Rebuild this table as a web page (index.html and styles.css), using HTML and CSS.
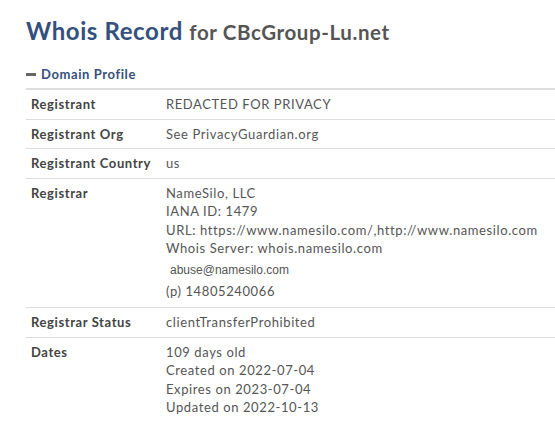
FILE: index.html
```html
<!DOCTYPE html>
<html>
<head>
<meta charset="utf-8">
<link rel="stylesheet" href="styles.css">
</head>
<body>
<div class="page">
  <h1 class="title">Whois Record <small>for CBcGroup-Lu.net</small></h1>
  <div class="section-head"><span class="minus"></span>Domain Profile</div>
  <table class="whois">
    <tr><th>Registrant</th><td>REDACTED FOR PRIVACY</td></tr>
    <tr><th>Registrant Org</th><td>See PrivacyGuardian.org</td></tr>
    <tr><th>Registrant Country</th><td>us</td></tr>
    <tr><th>Registrar</th><td>NameSilo, LLC<br>IANA ID: 1479<br>URL: https://www.namesilo.com/,http://www.namesilo.com<br>Whois Server: whois.namesilo.com<br>
      <div class="contact"><span class="email">abuse@namesilo.com</span><br>(p) 14805240066</div></td></tr>
    <tr><th>Registrar Status</th><td>clientTransferProhibited</td></tr>
    <tr><th>Dates</th><td>109 days old<br>Created on 2022-07-04<br>Expires on 2023-07-04<br>Updated on 2022-10-13</td></tr>
  </table>
</div>
</body>
</html>
```
FILE: styles.css
```css
html, body {
  margin: 0;
  padding: 0;
  background: #fff;
}
body {
  font-family: Lato, "Open Sans", sans-serif;
  font-size: 13px;
  line-height: 1.42857;
  color: #555;
  letter-spacing: 0.6px;
}
.page {
  padding: 0 0 0 26px;
  width: 560px;
}
.title {
  margin: 14px 0 0;
  font-size: 24px;
  font-weight: 700;
  line-height: 34px;
  color: #34507c;
  white-space: nowrap;
}
.title small {
  font-size: 20.5px;
  color: #555;
}
.section-head {
  margin-top: 15px;
  height: 21px;
  font-weight: 700;
  color: #34507c;
  display: flex;
  align-items: center;
}
.minus {
  display: inline-block;
  width: 10px;
  height: 3px;
  background: #666;
  margin-right: 5px;
}
.whois {
  border-collapse: collapse;
  width: 560px;
  border-top: 2px solid #ddd;
  margin-top: 3px;
}
.whois th, .whois td {
  padding: 5px 5px;
  text-align: left;
  vertical-align: top;
  border-bottom: 1px solid #ddd;
}
.whois th {
  width: 125px;
  font-weight: 700;
  color: #444;
  white-space: nowrap;
}
.whois td {
  color: #555;
  white-space: nowrap;
}
.contact {
  margin-top: 1px;
  line-height: 21px;
}
.email {
  font-family: "Liberation Sans", Arial, sans-serif;
  font-size: 12px;
  letter-spacing: 0;
  padding-left: 4px;
}
```
